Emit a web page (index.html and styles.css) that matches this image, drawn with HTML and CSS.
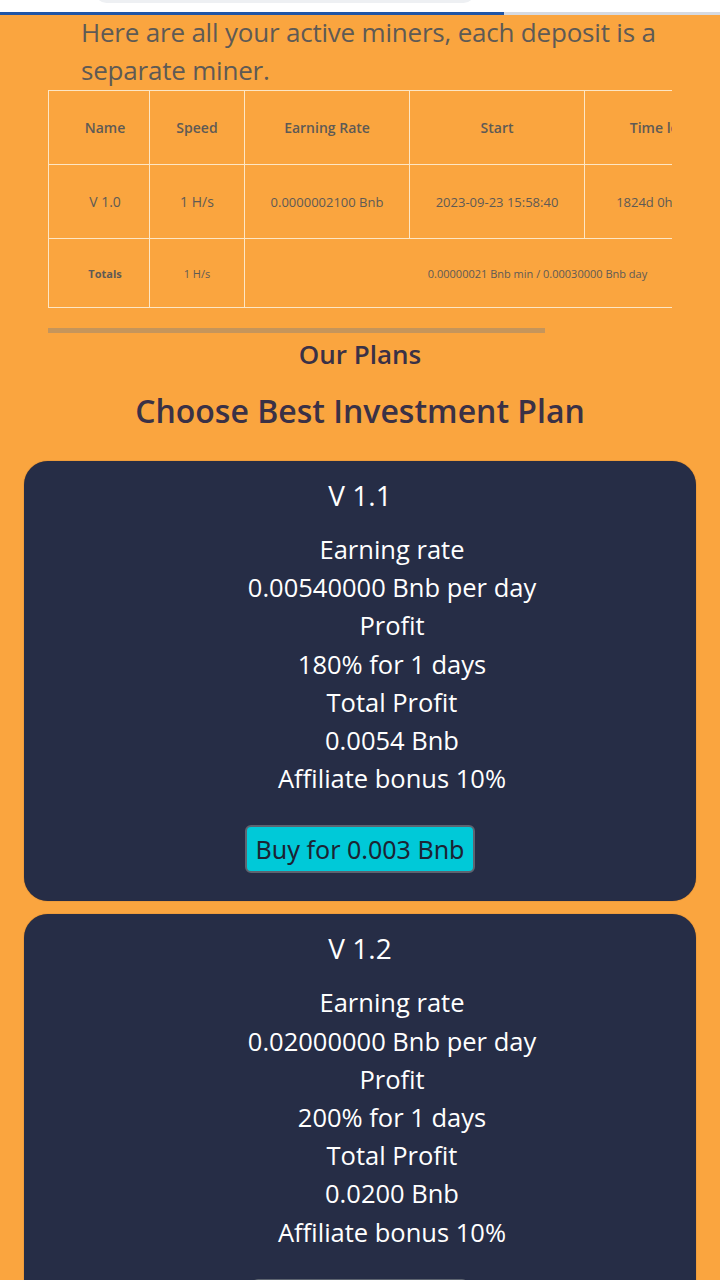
FILE: index.html
```html
<!DOCTYPE html>
<html lang="en">
<head>
  <meta charset="UTF-8" />
  <meta name="viewport" content="width=device-width, initial-scale=1.0"/>
  <title>My Miners</title>
  <link rel="stylesheet" href="styles.css">
</head>
<body>
  <div class="browser-top">
    <div class="address-bar"></div>
  </div>
  <div class="progress">
    <div class="progress-fill"></div>
  </div>

  <p class="intro">Here are all your active miners, each deposit is a separate miner.</p>

  <div class="table-wrap">
    <table class="miners">
      <thead>
        <tr>
          <th class="col-name">Name</th>
          <th class="col-speed">Speed</th>
          <th class="col-rate">Earning Rate</th>
          <th class="col-start">Start</th>
          <th class="col-left">Time left</th>
          <th class="col-status">Status</th>
        </tr>
      </thead>
      <tbody>
        <tr>
          <td class="first">V 1.0</td>
          <td>1 H/s</td>
          <td class="small">0.0000002100 Bnb</td>
          <td class="small">2023-09-23 15:58:40</td>
          <td class="small">1824d 0h 49m</td>
          <td class="small">Active</td>
        </tr>
        <tr class="totals">
          <td class="first"><b>Totals</b></td>
          <td>1 H/s</td>
          <td colspan="4">0.00000021 Bnb min / 0.00030000 Bnb day</td>
        </tr>
      </tbody>
    </table>
  </div>

  <div class="divider"></div>

  <h3 class="sub-title">Our Plans</h3>
  <h2 class="title">Choose Best Investment Plan</h2>

  <div class="plans">
    <div class="plan">
      <h4>V 1.1</h4>
      <ul>
        <li>Earning rate</li>
        <li>0.00540000 Bnb per day</li>
        <li>Profit</li>
        <li>180% for 1 days</li>
        <li>Total Profit</li>
        <li>0.0054 Bnb</li>
        <li>Affiliate bonus 10%</li>
      </ul>
      <button class="buy-btn">Buy for 0.003 Bnb</button>
    </div>

    <div class="plan">
      <h4>V 1.2</h4>
      <ul>
        <li>Earning rate</li>
        <li>0.02000000 Bnb per day</li>
        <li>Profit</li>
        <li>200% for 1 days</li>
        <li>Total Profit</li>
        <li>0.0200 Bnb</li>
        <li>Affiliate bonus 10%</li>
      </ul>
      <button class="buy-btn muted">Buy for 0.01 Bnb</button>
    </div>
  </div>
</body>
</html>
```

FILE: styles.css
```css
:root {
  --bg-orange: #faa53f;
  --card-bg: #262d46;
  --text-gray: #5e5a55;
  --heading: #3a3146;
  --cell-border: #fde6c4;
  --cyan: #00c9d8;
}

body {
  margin: 0;
  background-color: var(--bg-orange);
  font-family: 'Open Sans', 'Noto Sans', sans-serif;
  overflow-x: hidden;
}

.browser-top {
  height: 12px;
  background: #ffffff;
  position: relative;
}

.address-bar {
  position: absolute;
  left: 95px;
  top: -20px;
  width: 380px;
  height: 23px;
  border-radius: 12px;
  background: #eef0f3;
}

.progress {
  height: 3px;
  background: #d6dae1;
}

.progress-fill {
  width: 504px;
  height: 100%;
  background: #1f55a6;
}

.intro {
  margin: -2px 30px 0 81px;
  font-size: 26px;
  line-height: 38px;
  color: var(--text-gray);
  letter-spacing: -0.2px;
}

.table-wrap {
  margin: 1px 48px 0;
  overflow: hidden;
}

.miners {
  border-collapse: collapse;
  table-layout: fixed;
  width: 782px;
  color: var(--text-gray);
  text-align: center;
}

.miners th,
.miners td {
  border: 1px solid var(--cell-border);
  padding: 0 6px;
  white-space: nowrap;
}

.miners th {
  height: 73px;
  font-size: 14px;
  font-weight: 600;
}

.miners td {
  height: 73px;
  font-size: 14px;
}

.miners td.small {
  font-size: 13px;
}

.miners .col-name,
.miners .first {
  padding: 0 0 0 12px;
}

.col-name { width: 88px; }
.col-speed { width: 82px; }
.col-rate { width: 152px; }
.col-start { width: 162px; }
.col-left { width: 137px; }
.col-status { width: 83px; }

.miners .totals td {
  height: 68px;
  font-size: 11px;
}

.divider {
  margin: 20px 0 0 48px;
  width: 497px;
  height: 5px;
  background: #c5955b;
}

.sub-title {
  margin: 4px 0 0;
  text-align: center;
  font-size: 26px;
  font-weight: 600;
  line-height: 34px;
  color: var(--heading);
}

.title {
  margin: 20px 0 0;
  text-align: center;
  font-size: 32px;
  font-weight: 600;
  line-height: 40px;
  color: var(--heading);
}

.plans {
  margin: 30px 24px 0;
  display: flex;
  flex-direction: column;
  gap: 13px;
}

.plan {
  background: var(--card-bg);
  border-radius: 24px;
  padding: 17px 0 28px;
  color: #ffffff;
  text-align: center;
  box-shadow: 0 0 1px rgba(60, 30, 10, 0.6);
}

.plan h4 {
  margin: 0;
  font-size: 28px;
  font-weight: 500;
  line-height: 34px;
}

.plan ul {
  list-style: none;
  margin: 18px 0 0;
  padding: 0 0 0 64px;
}

.plan li {
  font-size: 25.5px;
  line-height: 38.2px;
}

.buy-btn {
  margin-top: 28px;
  height: 48px;
  padding: 0 9px;
  font-family: 'Noto Sans', 'Open Sans', sans-serif;
  font-size: 25px;
  color: #1c2333;
  background: var(--cyan);
  border: 2px solid #5d6470;
  border-radius: 6px;
}

.buy-btn.muted {
  background: #6b727b;
}
```
